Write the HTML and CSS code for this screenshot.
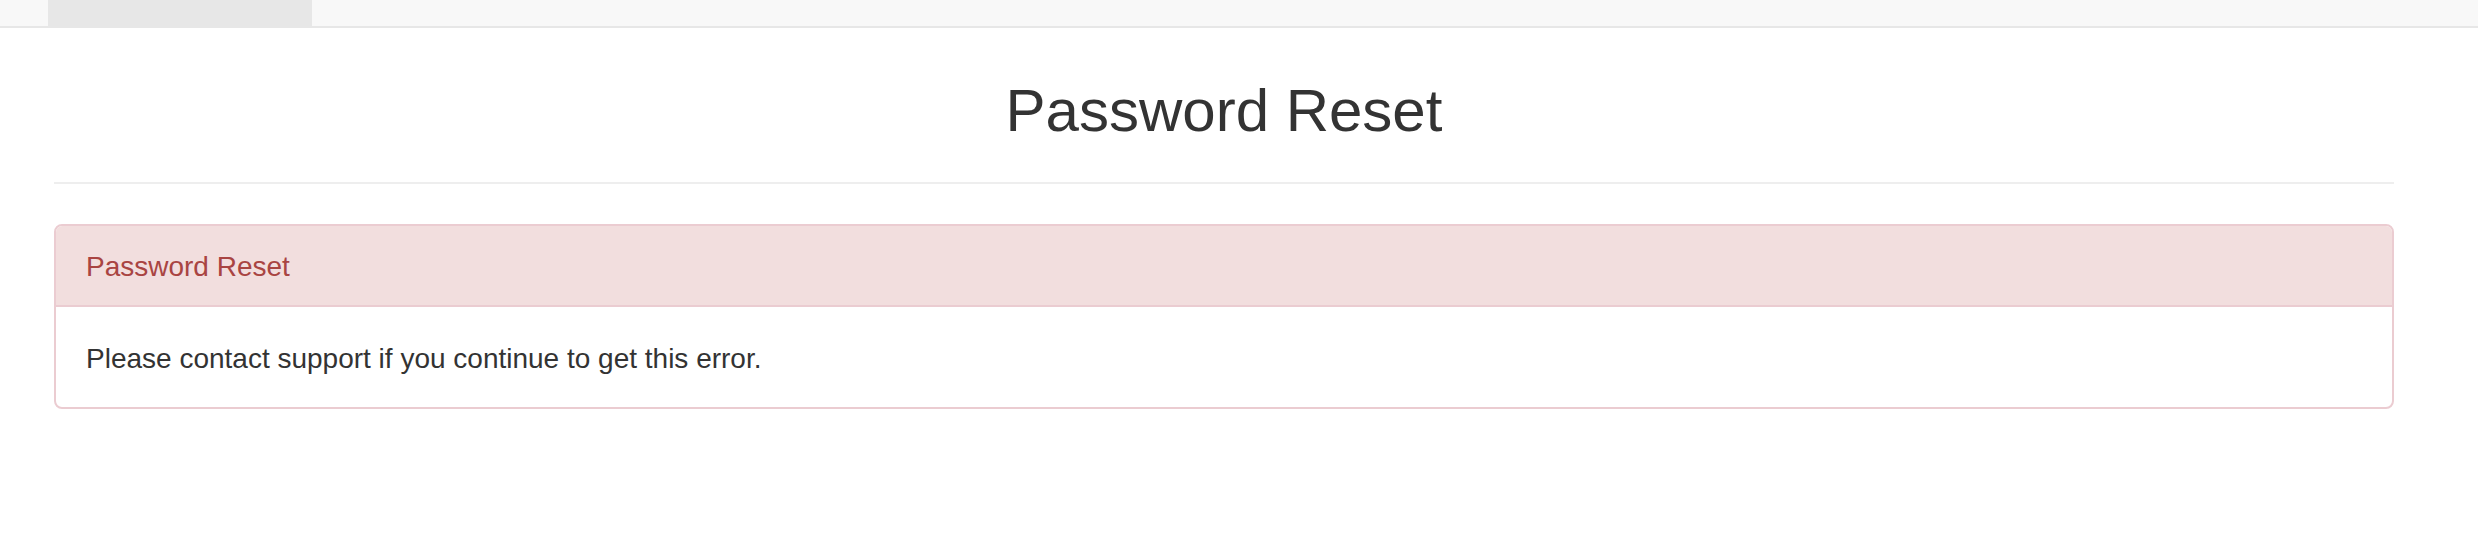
FILE: index.html
```html
<!DOCTYPE html>
<html lang="en">

<head>
  <meta charset="UTF-8">
  <meta name="viewport" content="width=device-width, initial-scale=1.0">
  <title>Password Reset</title>
  <link rel="stylesheet" href="styles.css">
</head>

<body>
  <div class="top-bar">
    <div class="top-tab"></div>
  </div>

  <div class="page-wrapper">
    <div class="page-header">
      <h1>Password Reset</h1>
    </div>

    <div class="panel panel-danger">
      <div class="panel-heading">Password Reset</div>
      <div class="panel-body">Please contact support if you continue to get this error.</div>
    </div>
  </div>
</body>

</html>
```

FILE: styles.css
```css
* {
  margin: 0;
  padding: 0;
  box-sizing: border-box;
  font-family: "Liberation Sans", Arial, sans-serif;
}

html,
body {
  width: 100%;
  background-color: #fff;
  color: #333;
}

.top-bar {
  display: flex;
  height: 28px;
  padding-left: 48px;
  background-color: #f8f8f8;
  border-bottom: 2px solid #e7e7e7;
}

.top-tab {
  width: 264px;
  background-color: #e7e7e7;
}

.page-wrapper {
  margin: 0 84px 0 54px;
}

.page-header {
  padding-top: 50px;
  padding-bottom: 38px;
  border-bottom: 2px solid #eee;
}

.page-header h1 {
  font-size: 60px;
  font-weight: 400;
  line-height: 66px;
  text-align: center;
  color: #333;
}

.panel {
  margin-top: 40px;
  border: 2px solid #ebccd1;
  border-radius: 8px;
  overflow: hidden;
}

.panel-heading {
  padding: 25px 30px 23px;
  font-size: 28px;
  line-height: 31px;
  background-color: #f2dede;
  color: #a94442;
  border-bottom: 2px solid #ebccd1;
}

.panel-body {
  padding: 32px 30px 28px;
  font-size: 28px;
  line-height: 40px;
  color: #333;
}
```
